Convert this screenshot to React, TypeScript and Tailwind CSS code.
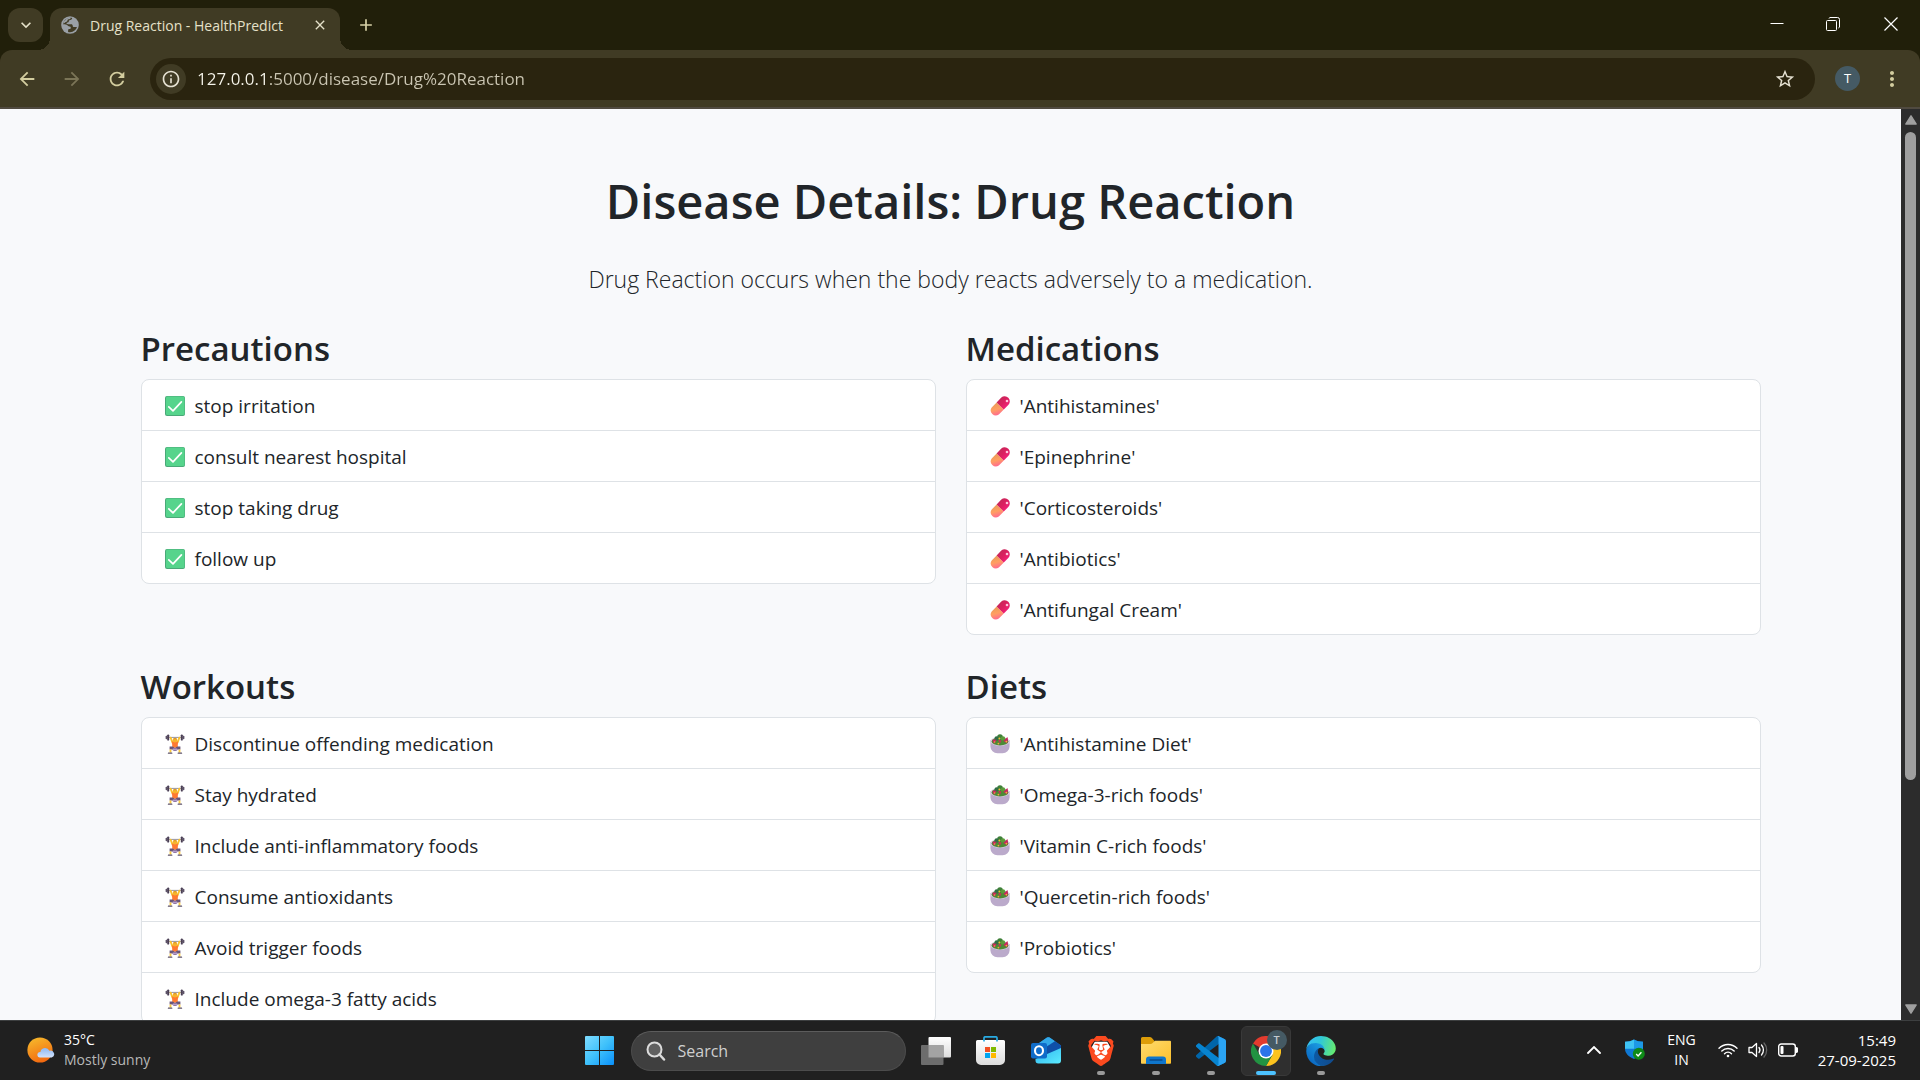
import React from "react";
import {
  MdAdd,
  MdArrowBack,
  MdArrowForward,
  MdClose,
  MdInfoOutline,
  MdKeyboardArrowDown,
  MdMoreVert,
  MdRefresh,
  MdStarBorder,
} from "react-icons/md";
import { SiBrave } from "react-icons/si";

/* ---------- List emoji ---------- */

function CheckEmoji() {
  return (
    <svg viewBox="0 0 20 20" className="size-5 shrink-0" aria-hidden="true">
      <rect width="20" height="20" rx="2" fill="#4aa878" />
      <rect x="1" y="0.5" width="18.5" height="18.5" rx="1.5" fill="#56d48c" />
      <path d="M3.8 10.8l4.2 4 8.4-9" fill="none" stroke="#fff" strokeWidth="1.7" strokeLinecap="round" strokeLinejoin="round" />
    </svg>
  );
}

function PillEmoji() {
  return (
    <svg viewBox="0 0 20 20" className="size-5 shrink-0" aria-hidden="true">
      <defs>
        <linearGradient id="pill-orange" x1="0" y1="0" x2="0.3" y2="1">
          <stop offset="0" stopColor="#e39a55" />
          <stop offset="0.6" stopColor="#ff9f62" />
          <stop offset="1" stopColor="#ff6f8c" />
        </linearGradient>
        <linearGradient id="pill-red" x1="0" y1="0" x2="1" y2="1">
          <stop offset="0" stopColor="#b92c55" />
          <stop offset="0.5" stopColor="#dc1f60" />
          <stop offset="1" stopColor="#ff2487" />
        </linearGradient>
      </defs>
      <path d="M6.6 6.4L1.700 11.400a5.100 5.100 0 0 0 7.100 7.100l5-4.900z" fill="url(#pill-orange)" />
      <path d="M6.600 6.400l4.700-4.800a5.100 5.100 0 0 1 7.200 7.200l-4.700 4.800z" fill="url(#pill-red)" />
      <circle cx="17" cy="5" r="1.3" fill="#ffc4dc" />
    </svg>
  );
}

function LifterEmoji() {
  return (
    <svg viewBox="0 0 20 20" className="size-5 shrink-0" aria-hidden="true">
      <path d="M2 3.4h16" stroke="#8c8791" strokeWidth="0.9" />
      <rect x="0.6" y="1.8" width="1.8" height="3.4" rx="0.8" fill="#5d5268" />
      <rect x="2.2" y="0.4" width="2" height="6.2" rx="0.9" fill="#4a3f55" />
      <rect x="15.8" y="0.4" width="2" height="6.2" rx="0.9" fill="#4a3f55" />
      <rect x="17.6" y="1.8" width="1.8" height="3.4" rx="0.8" fill="#5d5268" />
      <path d="M5.6 3.6l1.9 5M14.4 3.6l-1.9 5" stroke="#f9c22e" strokeWidth="1.8" strokeLinecap="round" />
      <path d="M6.9 7.4h6.2l-.5 6.4H7.4z" fill="#ff7a32" />
      <circle cx="10" cy="6.2" r="2.3" fill="#f6b42c" />
      <path d="M8 5.2a2.2 2.2 0 0 1 4 0z" fill="#d99428" />
      <path d="M4.6 12.6h3.2l2.2 1.4 2.2-1.4h3.2v2.8h-3l-1.2 1.6H8.8l-1.2-1.6h-3z" fill="#6a5578" />
      <path d="M7.8 14.6h4.4v2H7.8z" fill="#b69ccc" />
      <path d="M5.5 15.4v3.2M14.5 15.4v3.2" stroke="#fbc93a" strokeWidth="1.8" />
      <path d="M3.4 19.2h3.4M13.2 19.2h3.4" stroke="#5d5268" strokeWidth="1.2" strokeLinecap="round" />
    </svg>
  );
}

function SaladEmoji() {
  return (
    <svg viewBox="0 0 20 20" className="size-5 shrink-0" aria-hidden="true">
      <path d="M0.4 6h19.2v6.4a7 7 0 0 1-7 6.8H7.4a7 7 0 0 1-7-6.8z" fill="#bbaacb" />
      <ellipse cx="10" cy="7.4" rx="9.7" ry="4.4" fill="#d9d3e0" />
      <ellipse cx="10" cy="7.6" rx="8.4" ry="3.9" fill="#4d8a35" />
      <circle cx="10" cy="3" r="2.8" fill="#3e8038" />
      <circle cx="6.6" cy="4.4" r="2.2" fill="#2f6e46" />
      <circle cx="13" cy="4.4" r="2.2" fill="#5b9a3a" />
      <path d="M2.6 5.4l4 .4-2 3.6-1.6-1zM17.4 3l-4 4 3.8 2.2.8-4z" fill="#c92660" />
      <path d="M8.2 6l3.2.6-1.4 3z" fill="#ce2b5e" />
      <circle cx="9.4" cy="4.4" r="1" fill="#f5b834" />
      <circle cx="8.4" cy="9.6" r="0.9" fill="#f2a63a" />
      <circle cx="16.4" cy="7.6" r="0.9" fill="#f5b834" />
      <circle cx="4.6" cy="8" r="0.8" fill="#f2a63a" />
    </svg>
  );
}

/* ---------- Disease page ---------- */

type Section = { title: string; icon: () => React.ReactElement; items: string[] };

const sections: Section[] = [
  {
    title: "Precautions",
    icon: CheckEmoji,
    items: ["stop irritation", "consult nearest hospital", "stop taking drug", "follow up"],
  },
  {
    title: "Medications",
    icon: PillEmoji,
    items: ["'Antihistamines'", "'Epinephrine'", "'Corticosteroids'", "'Antibiotics'", "'Antifungal Cream'"],
  },
  {
    title: "Workouts",
    icon: LifterEmoji,
    items: [
      "Discontinue offending medication",
      "Stay hydrated",
      "Include anti-inflammatory foods",
      "Consume antioxidants",
      "Avoid trigger foods",
      "Include omega-3 fatty acids",
    ],
  },
  {
    title: "Diets",
    icon: SaladEmoji,
    items: [
      "'Antihistamine Diet'",
      "'Omega-3-rich foods'",
      "'Vitamin C-rich foods'",
      "'Quercetin-rich foods'",
      "'Probiotics'",
    ],
  },
];

function SectionList({ title, icon: Icon, items }: Section) {
  return (
    <section>
      <h2 className="mb-2 text-[33px] leading-11 font-semibold">{title}</h2>
      <ul className="divide-y divide-[#dee2e6] overflow-hidden rounded-lg border border-[#dee2e6] bg-white">
        {items.map((item) => (
          <li key={item} className="flex items-center gap-2.5 px-[23px] pt-[11px] pb-[9px] text-[19px] leading-[30px]">
            <Icon />
            {item}
          </li>
        ))}
      </ul>
    </section>
  );
}

function DiseasePage() {
  return (
    <main className="min-w-0 flex-1 overflow-hidden bg-[#f8f9fb] pt-15 text-[#212529]">
      <div className="mx-auto max-w-[1650px] px-[15px]">
        <h1 className="mb-[26px] text-center text-[47px] leading-16 font-semibold">
          Disease Details: Drug Reaction
        </h1>
        <p className="mb-7 text-center text-[23px] leading-10 font-light">
          Drug Reaction occurs when the body reacts adversely to a medication.
        </p>
        <div className="grid grid-cols-2 gap-[30px]">
          {sections.map((s) => (
            <SectionList key={s.title} {...s} />
          ))}
        </div>
      </div>
    </main>
  );
}

function Scrollbar() {
  return (
    <div className="flex w-[19px] shrink-0 flex-col items-center bg-[#2c2c2c] py-1.5">
      <svg viewBox="0 0 12 10" className="h-2.5 w-3" aria-hidden="true">
        <path d="M6 0.8L11.2 9H0.8z" fill="#9f9f9f" stroke="#9f9f9f" strokeWidth="1.4" strokeLinejoin="round" />
      </svg>
      <div className="flex w-[11px] flex-1 flex-col pt-[7px] pb-2">
        <div className="h-3/4 rounded-full bg-[#9f9f9f]" />
      </div>
      <svg viewBox="0 0 12 10" className="h-2.5 w-3" aria-hidden="true">
        <path d="M6 9.2L11.2 1H0.8z" fill="#9f9f9f" stroke="#9f9f9f" strokeWidth="1.4" strokeLinejoin="round" />
      </svg>
    </div>
  );
}

/* ---------- Browser frame ---------- */

function Globe() {
  return (
    <svg viewBox="0 0 18 18" className="size-[18px] shrink-0" aria-hidden="true">
      <circle cx="9" cy="9" r="8.8" fill="#9aa0a6" />
      <path
        d="M11.200 2c-.2 1.300-1 1.900-2.100 2-1 .1-1.400.5-1.300 1.300.1.900-.7 1.200-1.500 1.300-.7.100-1 .6-.7 1.200.3.500 1.200.4 2.300.4h2.300c1 0 1.500.7 1.500 1.600 0 .8.500 1.300 1.300 1.300h3c-.8 2.800-3.300 5-6.900 5.100-.8 0-1.500-.1-2-.3v-1.500c0-.8.600-1.300 1.400-1.300.8 0 1.300-.5 1.300-1.300 0-1-.6-1.400-1.500-1.400-.9 0-1.300-.500-1.900-1.200C5.700 8.600 4.300 8.300 1.900 8.300c.2-1.500.8-2.800 1.700-3.800C5.500 2.300 8.500 1.300 11.200 2z"
        fill="#413b24"
      />
      <path d="M4.200 4.200c1.400-1.800 3.600-2.500 5.600-2.300-.3.800-1.200 1.200-2.200 1.300-.9.100-1.100.8-1.200 1.500-.1.800-.8 1-1.500 1.300-.9.300-1.100 1.300-2.900 1.500.3-1.300.9-2.300 2.200-3.300z" fill="#9aa0a6" />
    </svg>
  );
}

function TabStrip() {
  return (
    <header className="flex h-[50px] items-end bg-[#211f0a] text-[#e5e1c9]">
      <button aria-label="Search tabs" className="mb-2 ml-2 flex h-[34px] w-[35px] items-center justify-center rounded-xl bg-[#403b24]">
        <MdKeyboardArrowDown size={20} />
      </button>
      <div className="relative ml-[7px] flex h-[42px] w-[290px] items-center rounded-t-xl bg-[#403b24] pr-2.5 pb-2 pl-[11px]">
        <span className="absolute bottom-0 -left-3 size-3 bg-[radial-gradient(circle_at_0_0,transparent_12px,#403b24_12px)]" />
        <span className="absolute -right-3 bottom-0 size-3 bg-[radial-gradient(circle_at_100%_0,transparent_12px,#403b24_12px)]" />
        <Globe />
        <span className="ml-[11px] flex-1 text-[14px] whitespace-nowrap">Drug Reaction - HealthPredict</span>
        <button aria-label="Close tab" className="flex size-5 items-center justify-center">
          <MdClose size={16} />
        </button>
      </div>
      <button aria-label="New tab" className="mb-[15px] ml-4 flex size-5 items-center justify-center text-[#d8d2a8]">
        <MdAdd size={20} />
      </button>
      <div className="ml-auto flex h-full items-center pb-0.5 text-white">
        <button aria-label="Minimize" className="flex h-full w-14 items-center justify-center">
          <svg viewBox="0 0 14 14" className="size-3.5" aria-hidden="true">
            <path d="M0.500 6.500h13" stroke="currentColor" />
          </svg>
        </button>
        <button aria-label="Restore" className="flex h-full w-14 items-center justify-center">
          <svg viewBox="0 0 14 14" className="size-3.5" fill="none" stroke="currentColor" aria-hidden="true">
            <rect x="0.500" y="3.500" width="10" height="10" rx="1" />
            <path d="M3 1.500a1.500 1.500 0 0 1 1-1h7.500a2 2 0 0 1 2 2V10a1.500 1.500 0 0 1-1 1" />
          </svg>
        </button>
        <button aria-label="Close" className="flex h-full w-[59px] items-center justify-center">
          <svg viewBox="0 0 14 14" className="size-3.5" aria-hidden="true">
            <path d="M0.500 0.500l13 13M13.500 0.500l-13 13" stroke="currentColor" strokeWidth="1.2" />
          </svg>
        </button>
      </div>
    </header>
  );
}

function Toolbar() {
  return (
    <div className="bg-[#211f0a]">
      <div className="flex h-[59px] items-center rounded-t-xl border-b-2 border-[#504a40] bg-[#403b24] pl-4 text-[#d3cd9f]">
        <button aria-label="Back" className="flex w-[45px]">
          <MdArrowBack size={22} />
        </button>
        <button aria-label="Forward" className="flex w-[45px] text-[#7b7557]">
          <MdArrowForward size={22} />
        </button>
        <button aria-label="Reload" className="flex w-11">
          <MdRefresh size={22} />
        </button>
        <div className="flex h-[42px] flex-1 items-center rounded-full bg-[#2a240f] pr-[19px] pl-1.5 text-[#e5e1d2]">
          <button aria-label="Site information" className="flex size-[30px] items-center justify-center rounded-full bg-[#403b24]">
            <MdInfoOutline size={20} />
          </button>
          <input
            aria-label="Address"
            defaultValue="127.0.0.1:5000/disease/Drug%20Reaction"
            className="ml-[11px] min-w-0 flex-1 bg-[linear-gradient(to_right,#f6f4ea_71px,#cbc6b3_71px)] bg-clip-text text-[17px] text-transparent outline-none"
          />
          <button aria-label="Bookmark this page">
            <MdStarBorder size={22} />
          </button>
        </div>
        <button aria-label="Profile" className="ml-5 flex size-[25px] items-center justify-center rounded-full bg-[#455a64] text-[13px] text-white">
          T
        </button>
        <button aria-label="Menu" className="mr-4 ml-5 flex w-6 justify-center">
          <MdMoreVert size={24} />
        </button>
      </div>
    </div>
  );
}

/* ---------- Taskbar ---------- */

function WeatherIcon() {
  return (
    <svg viewBox="0 0 28 26" className="h-[26px] w-7 shrink-0" aria-hidden="true">
      <defs>
        <linearGradient id="sun" x1="0.2" y1="0" x2="0.6" y2="1">
          <stop offset="0" stopColor="#f6b92c" />
          <stop offset="1" stopColor="#f2670f" />
        </linearGradient>
        <linearGradient id="cloud" x1="0" y1="0" x2="0" y2="1">
          <stop offset="0" stopColor="#8db8f3" />
          <stop offset="1" stopColor="#d3e2fa" />
        </linearGradient>
      </defs>
      <circle cx="13" cy="13" r="12.600" fill="url(#sun)" />
      <path d="M13 20.500a2.800 2.800 0 0 1 .4-5.600 4.800 4.800 0 0 1 9-1.200 3.500 3.500 0 0 1 2.300 6.800z" fill="url(#cloud)" />
    </svg>
  );
}

function WindowsIcon() {
  return (
    <svg viewBox="0 0 29 29" className="size-[29px]" aria-hidden="true">
      <defs>
        <linearGradient id="win" x1="0" y1="0" x2="29" y2="29" gradientUnits="userSpaceOnUse">
          <stop offset="0" stopColor="#7fdcff" />
          <stop offset="0.5" stopColor="#3fc1fb" />
          <stop offset="1" stopColor="#0a90fa" />
        </linearGradient>
      </defs>
      <path d="M1 0h13v14H0V1a1 1 0 0 1 1-1zM15 0h13a1 1 0 0 1 1 1v13H15zM0 15h14v14H1a1 1 0 0 1-1-1zM15 15h14v13a1 1 0 0 1-1 1H15z" fill="url(#win)" />
    </svg>
  );
}

function TaskViewIcon() {
  return (
    <svg viewBox="0 0 30 28" className="h-7 w-[30px]" aria-hidden="true">
      <defs>
        <linearGradient id="tv-front" x1="0" y1="0" x2="0" y2="1">
          <stop offset="0" stopColor="#fff" />
          <stop offset="1" stopColor="#dcdcdc" />
        </linearGradient>
      </defs>
      <rect x="7.500" y="0" width="22.500" height="20.500" rx="1" fill="url(#tv-front)" />
      <rect x="0" y="8" width="22.500" height="20" rx="1" fill="#6d6d6d" />
      <path d="M7.500 8h15v12.500h-15z" fill="#a3a3a3" />
    </svg>
  );
}

function StoreIcon() {
  return (
    <svg viewBox="0 0 29 29" className="size-[29px]" aria-hidden="true">
      <defs>
        <linearGradient id="bag" x1="0" y1="0" x2="0" y2="1">
          <stop offset="0" stopColor="#fff" />
          <stop offset="1" stopColor="#dcdcdc" />
        </linearGradient>
      </defs>
      <path d="M0 5.500A1.500 1.500 0 0 1 1.500 4h26A1.500 1.500 0 0 1 29 5.500V24a5 5 0 0 1-5 5H5a5 5 0 0 1-5-5z" fill="url(#bag)" />
      <path d="M8 5.500V2a1.200 1.200 0 0 1 1.200-1.200h10.600A1.200 1.200 0 0 1 21 2v3.500" fill="none" stroke="#29abe2" strokeWidth="1.700" />
      <path d="M9 11h5v5H9z" fill="#f25022" />
      <path d="M15 11h5v5h-5z" fill="#7fba00" />
      <path d="M9 17h5v5H9z" fill="#00a4ef" />
      <path d="M15 17h5v5h-5z" fill="#ffb900" />
    </svg>
  );
}

function OutlookIcon() {
  return (
    <svg viewBox="0 0 30 27" className="h-[27px] w-[30px]" aria-hidden="true">
      <defs>
        <linearGradient id="ol" x1="0" y1="0" x2="1" y2="1">
          <stop offset="0" stopColor="#2fb4ee" />
          <stop offset="1" stopColor="#5cebff" />
        </linearGradient>
      </defs>
      <path d="M4.500 8.500L16 .6a2.400 2.400 0 0 1 2.600 0L30 8.500V20H4.500z" fill="#1689d8" />
      <path d="M4.500 8.500L16 .6a2.400 2.400 0 0 1 2.600 0L24 4.300 8 14z" fill="#32a8e8" />
      <path d="M24 4.300l6 4.200v3L16 19.500V9.500z" fill="#0f4fa8" />
      <path d="M30 11v12.500a3 3 0 0 1-3 3H7.500a3 3 0 0 1-3-3V22z" fill="url(#ol)" />
      <rect x="0" y="6" width="16" height="15.500" rx="2" fill="#0f6cc9" />
      <ellipse cx="8" cy="13.700" rx="4" ry="4.500" fill="none" stroke="#fff" strokeWidth="2.100" />
    </svg>
  );
}

function BraveIcon() {
  return (
    <span className="grid size-[30px] place-items-center">
      <svg viewBox="0 0 24 24" className="col-start-1 row-start-1 size-[30px]" aria-hidden="true">
        <path d="M7 4.500h10l3 5.500-3.500 8.500L12 22l-4.500-3.500L4 10z" fill="#fff" />
      </svg>
      <SiBrave size={30} color="#fb4a1f" className="col-start-1 row-start-1" />
    </span>
  );
}

function FolderIcon() {
  return (
    <svg viewBox="0 0 30 27" className="h-[27px] w-[30px]" aria-hidden="true">
      <defs>
        <linearGradient id="folder" x1="0" y1="0" x2="1" y2="1">
          <stop offset="0" stopColor="#ffdb6e" />
          <stop offset="1" stopColor="#fcc02c" />
        </linearGradient>
      </defs>
      <path d="M0 1.500A1.500 1.500 0 0 1 1.500 0h7.300a3 3 0 0 1 1.900.7L13.500 4v5H0z" fill="#dd9d09" />
      <path d="M0 7h9.500a3 3 0 0 0 1.900-.7l2.600-2.500H29a1 1 0 0 1 1 1V26a.8.800 0 0 1-.8.800H.8A.8.800 0 0 1 0 26z" fill="url(#folder)" />
      <path d="M5 27v-4.500a3 3 0 0 1 3-3h14a3 3 0 0 1 3 3V27z" fill="#0f76cc" />
      <path d="M9 23h12" stroke="#0a4b8c" strokeWidth="1.300" strokeLinecap="round" />
    </svg>
  );
}

function VsCodeIcon() {
  return (
    <svg viewBox="0 0 100 100" className="size-[30px]" aria-hidden="true">
      <path d="M96.4614 10.7962L75.8569 0.875542C73.4719 -0.272773 70.6217 0.211611 68.75 2.08333L1.29858 63.5832C-0.515693 65.2373 -0.513607 68.0937 1.30308 69.7452L6.81272 74.754C8.29793 76.1042 10.5347 76.2036 12.1338 74.9905L93.3609 13.3699C96.086 11.3026 100 13.2462 100 16.6667V16.4275C100 14.0265 98.6246 11.8378 96.4614 10.7962Z" fill="#0065A9" />
      <path d="M96.4614 89.2038L75.8569 99.1245C73.4719 100.273 70.6217 99.7884 68.75 97.9167L1.29858 36.4169C-0.515693 34.7627 -0.513607 31.9063 1.30308 30.2548L6.81272 25.246C8.29793 23.8958 10.5347 23.7964 12.1338 25.0095L93.3609 86.6301C96.086 88.6974 100 86.7538 100 83.3334V83.5726C100 85.9735 98.6246 88.1622 96.4614 89.2038Z" fill="#0784d0" />
      <path d="M75.8578 99.1263C73.4721 100.274 70.6219 99.7885 68.75 97.9166C71.0564 100.223 75 98.5895 75 95.3278V4.67213C75 1.41039 71.0564 -0.223106 68.75 2.08329C70.6219 0.211402 73.4721 -0.273666 75.8578 0.873633L96.4587 10.7807C98.6234 11.8217 100 14.0112 100 16.4132V83.5871C100 85.9892 98.6234 88.1786 96.4586 89.2196L75.8578 99.1263Z" fill="#2ba4f3" />
    </svg>
  );
}

function ChromeIcon() {
  return (
    <span className="relative">
      <svg viewBox="0 0 48 48" className="size-[30px]" aria-hidden="true">
        <path d="M24 24L3.200 12A24 24 0 0 1 44.800 12z" fill="#e33b2e" />
        <path d="M24 12h20.800A24 24 0 0 1 24 48l10.400-18z" fill="#fcc31e" />
        <path d="M13.600 30L3.200 12A24 24 0 0 0 24 48l10.400-18z" fill="#229342" />
        <circle cx="24" cy="24" r="12" fill="#fff" />
        <circle cx="24" cy="24" r="9.500" fill="#2a74e8" />
      </svg>
      <span className="absolute -top-1.5 -right-1.5 flex size-5 items-center justify-center rounded-full bg-[#455a64] text-[11px] font-semibold text-[#c3cbd0]">
        T
      </span>
    </span>
  );
}

function EdgeIcon() {
  return (
    <svg viewBox="0 0 256 260" className="size-[30px]" aria-hidden="true">
      <defs>
        <linearGradient id="edge-dark" x1="63" y1="178" x2="241" y2="178" gradientUnits="userSpaceOnUse">
          <stop offset="0" stopColor="#0c59a4" />
          <stop offset="1" stopColor="#114a8b" />
        </linearGradient>
        <linearGradient id="edge-mid" x1="157" y1="100" x2="46" y2="222" gradientUnits="userSpaceOnUse">
          <stop offset="0" stopColor="#1b9de2" />
          <stop offset="0.5" stopColor="#1383d2" />
          <stop offset="1" stopColor="#0c6cc4" />
        </linearGradient>
        <linearGradient id="edge-top" x1="20" y1="60" x2="250" y2="120" gradientUnits="userSpaceOnUse">
          <stop offset="0" stopColor="#35c1f1" />
          <stop offset="0.4" stopColor="#30c8d8" />
          <stop offset="1" stopColor="#66eb6e" />
        </linearGradient>
      </defs>
      <path d="M235.680 195.460a93.730 93.730 0 0 1-10.540 4.710 101.870 101.870 0 0 1-35.900 6.460c-47.320 0-88.540-32.550-88.540-74.320A31.480 31.480 0 0 1 117.130 105c-42.800 1.800-53.800 46.400-53.800 72.530 0 73.880 68.090 81.370 82.760 81.370 7.910 0 19.840-2.300 27-4.560l1.310-.44a128.340 128.340 0 0 0 66.600-52.800 4 4 0 0 0-5.320-5.640z" fill="url(#edge-dark)" />
      <path d="M105.730 246.420a79.200 79.200 0 0 1-22.740-21.340 80.720 80.720 0 0 1 29.530-120c3.120-1.470 8.450-4.130 15.540-4a32.350 32.350 0 0 1 25.690 13 31.880 31.880 0 0 1 6.360 18.660c0-.21 24.460-79.600-80-79.600-43.900 0-80 41.660-80 78.210a130.150 130.150 0 0 0 12.110 56 128 128 0 0 0 156.380 67.110 75.550 75.550 0 0 1-62.780-8z" fill="url(#edge-mid)" />
      <path d="M152.330 148.860c-.81 1.050-3.300 2.500-3.300 5.660 0 2.610 1.700 5.120 4.720 7.230 14.380 10 41.490 8.680 41.560 8.680a59.560 59.560 0 0 0 30.270-8.350A61.380 61.380 0 0 0 256 109.200c.26-22.410-8-37.310-11.340-43.910C223.460 23.840 177.720 0 128 0A128 128 0 0 0 0 126.200c.48-36.540 36.800-66.050 80-66.050 3.500 0 23.460.34 42 10.070 16.340 8.580 24.900 18.940 30.850 29.210 6.180 10.670 7.280 24.150 7.280 29.520s-2.740 13.330-7.800 19.910z" fill="url(#edge-top)" />
    </svg>
  );
}

type TaskApp = { name: string; icon: () => React.ReactElement; state: "idle" | "running" | "active" };

const apps: TaskApp[] = [
  { name: "Task view", icon: TaskViewIcon, state: "idle" },
  { name: "Microsoft Store", icon: StoreIcon, state: "idle" },
  { name: "Outlook", icon: OutlookIcon, state: "idle" },
  { name: "Brave", icon: BraveIcon, state: "running" },
  { name: "File Explorer", icon: FolderIcon, state: "running" },
  { name: "Visual Studio Code", icon: VsCodeIcon, state: "running" },
  { name: "Google Chrome", icon: ChromeIcon, state: "active" },
  { name: "Microsoft Edge", icon: EdgeIcon, state: "running" },
];

const tileStyle = {
  idle: "border-transparent",
  running: "border-transparent",
  active: "border-[#393939] bg-[#2f2f2f]",
};

const markStyle = {
  idle: "hidden",
  running: "w-2 bg-[#9a9a9a]",
  active: "w-5 bg-[#4cc2ff]",
};

function AppButton({ name, icon: Icon, state }: TaskApp) {
  return (
    <button aria-label={name} className={`relative flex size-[50px] items-center justify-center rounded-md border ${tileStyle[state]}`}>
      <Icon />
      <span className={`absolute bottom-0 h-1 rounded-full ${markStyle[state]}`} />
    </button>
  );
}

function ShieldIcon() {
  return (
    <svg viewBox="0 0 20 21" className="h-[21px] w-5" aria-hidden="true">
      <path d="M9 .5c2.600 1.700 5.500 2.200 9 2.200v7c0 4.500-3.500 7.800-9 10.300C3.500 17.500 0 14.200 0 9.700v-7C3.500 2.700 6.400 2.200 9 .5z" fill="#0f78d4" />
      <path d="M9 .5v9.200H0v-7C3.500 2.700 6.400 2.200 9 .5z" fill="#3fc3f3" />
      <path d="M9 .5c2.600 1.700 5.500 2.200 9 2.200v7H9z" fill="#1d98e6" />
      <circle cx="13.800" cy="14.800" r="6" fill="#0e8a16" />
      <path d="M11.200 15l1.900 1.900 3.300-3.600" fill="none" stroke="#fff" strokeWidth="1.400" />
    </svg>
  );
}

function TrayStatus() {
  return (
    <button aria-label="Network, volume and battery" className="flex items-center gap-2.5">
      <svg viewBox="0 0 20 16" className="h-4 w-5" fill="none" stroke="#fff" strokeWidth="1.400" strokeLinecap="round" aria-hidden="true">
        <path d="M1 6.200a12.700 12.700 0 0 1 18 0M3.800 9a8.800 8.800 0 0 1 12.400 0M6.500 11.700a5 5 0 0 1 7 0" />
        <circle cx="10" cy="14" r="1.300" fill="#fff" stroke="none" />
      </svg>
      <svg viewBox="0 0 20 16" className="h-4 w-5" fill="none" stroke="#fff" strokeWidth="1.300" strokeLinecap="round" strokeLinejoin="round" aria-hidden="true">
        <path d="M1 5.500h3L8.500 1.500v13L4 10.500H1z" />
        <path d="M11 5.500a4 4 0 0 1 0 5M13.500 3a7.500 7.500 0 0 1 0 10" />
        <path d="M16 1a10.500 10.500 0 0 1 0 14" stroke="#666" />
      </svg>
      <svg viewBox="0 0 20 14" className="h-3.5 w-5" aria-hidden="true">
        <rect x="0.700" y="1" width="16.600" height="12" rx="2.500" fill="none" stroke="#fff" strokeWidth="1.400" />
        <rect x="2.500" y="3" width="3" height="8" rx="1" fill="#fff" />
        <path d="M18 4.500a2.500 2.500 0 0 1 0 5z" fill="#fff" stroke="#fff" />
      </svg>
    </button>
  );
}

function Taskbar() {
  return (
    <footer className="grid h-15 grid-cols-[1fr_auto_1fr] items-center border-t border-[#3d3f40] bg-[#202020] text-[14px] leading-5 text-white">
      <div className="flex items-center gap-[9px] pb-0.5 pl-[27px]">
        <WeatherIcon />
        <div>
          <p>35°C</p>
          <p className="text-[#b8b8b8]">Mostly sunny</p>
        </div>
      </div>
      <div className="flex items-center gap-[5px] pl-2.5">
        <button aria-label="Start" className="mr-3">
          <WindowsIcon />
        </button>
        <label className="flex h-10 w-[275px] items-center gap-3 rounded-full border border-[#4c4c4c] border-t-[#5c5c5c] bg-[#3f3f3f] pl-3.5">
          <svg viewBox="0 0 20 20" className="size-5 shrink-0" fill="none" stroke="#dcdcdc" aria-hidden="true">
            <circle cx="8.500" cy="8.500" r="7" strokeWidth="2" fill="#606060" />
            <path d="M13.500 13.500l4.500 5" strokeWidth="2.500" strokeLinecap="round" />
          </svg>
          <input type="search" aria-label="Search" placeholder="Search" className="min-w-0 flex-1 bg-transparent text-[16px] outline-none placeholder:text-[#cfcfcf]" />
        </label>
        {apps.map((app) => (
          <AppButton key={app.name} {...app} />
        ))}
      </div>
      <div className="flex items-center justify-end pr-6 pb-0.5">
        <button aria-label="Show hidden icons" className="mr-6">
          <svg viewBox="0 0 14 8" className="h-2 w-3.5" fill="none" stroke="#fff" strokeWidth="1.800" strokeLinecap="round" aria-hidden="true">
            <path d="M1 7l6-6 6 6" />
          </svg>
        </button>
        <ShieldIcon />
        <p className="mx-[22px] text-center">
          ENG
          <br />
          IN
        </p>
        <TrayStatus />
        <p className="ml-5 text-right text-[15px]">
          15:49
          <br />
          27-09-2025
        </p>
      </div>
    </footer>
  );
}

export default function App() {
  return (
    <div className="flex h-screen flex-col overflow-hidden font-['Open_Sans','Noto_Sans',sans-serif]">
      <TabStrip />
      <Toolbar />
      <div className="flex min-h-0 flex-1">
        <DiseasePage />
        <Scrollbar />
      </div>
      <Taskbar />
    </div>
  );
}
